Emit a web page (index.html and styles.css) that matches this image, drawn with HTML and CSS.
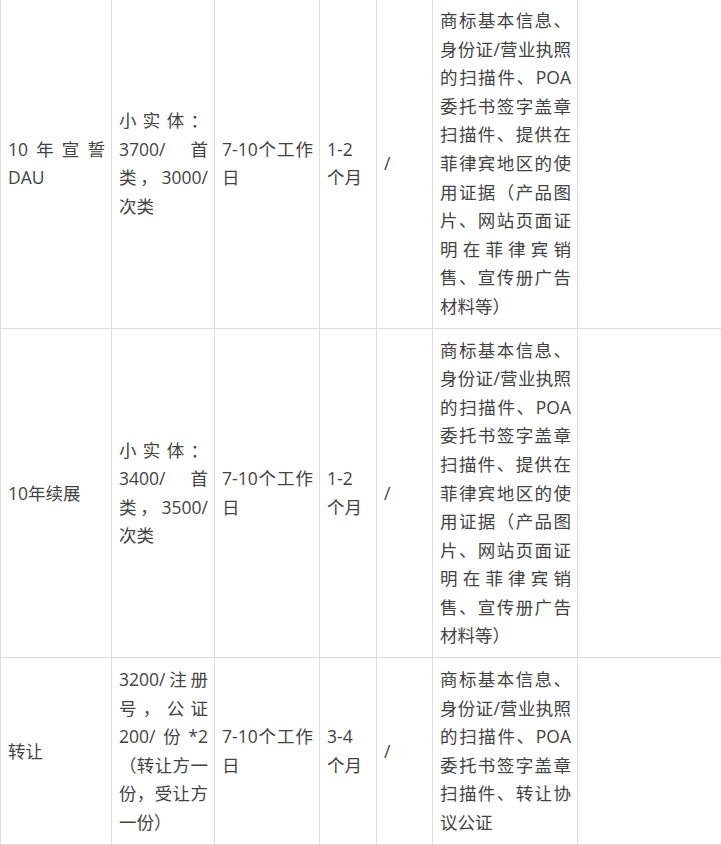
FILE: index.html
```html
<!DOCTYPE html>
<html lang="zh-CN">
<head>
<meta charset="utf-8">
<title>菲律宾商标费用</title>
<link rel="stylesheet" href="styles.css">
</head>
<body>
<table class="fees">
  <colgroup>
    <col class="c1"><col class="c2"><col class="c3"><col class="c4"><col class="c5"><col class="c6"><col class="c7">
  </colgroup>
  <tbody>
    <tr>
      <td>10年宣誓DAU</td>
      <td>小实体：3700/首类，3000/次类</td>
      <td>7-10个工作日</td>
      <td class="period">1-2个月</td>
      <td>/</td>
      <td>商标基本信息、身份证/营业执照的扫描件、POA委托书签字盖章扫描件、提供在菲律宾地区的使用证据（产品图片、网站页面证明在菲律宾销售、宣传册广告材料等）</td>
      <td></td>
    </tr>
    <tr>
      <td>10年续展</td>
      <td>小实体：3400/首类，3500/次类</td>
      <td>7-10个工作日</td>
      <td class="period">1-2个月</td>
      <td>/</td>
      <td>商标基本信息、身份证/营业执照的扫描件、POA委托书签字盖章扫描件、提供在菲律宾地区的使用证据（产品图片、网站页面证明在菲律宾销售、宣传册广告材料等）</td>
      <td></td>
    </tr>
    <tr>
      <td>转让</td>
      <td>3200/注册号，公证200/份*2（转让方一份，受让方一份）</td>
      <td>7-10个工作日</td>
      <td class="period">3-4个月</td>
      <td>/</td>
      <td>商标基本信息、身份证/营业执照的扫描件、POA委托书签字盖章扫描件、转让协议公证</td>
      <td></td>
    </tr>
  </tbody>
</table>
</body>
</html>
```

FILE: styles.css
```css
html, body {
  margin: 0;
  padding: 0;
  background: #ffffff;
}

.fees {
  margin-top: -2px;
  width: 721px;
  table-layout: fixed;
  border-collapse: collapse;
  font-family: "Open Sans", "Noto Sans CJK SC", sans-serif;
  font-size: 17.5px;
  line-height: 28.6px;
  color: #434343;
}

.c1 { width: 111px; }
.c2 { width: 103px; }
.c3 { width: 105px; }
.c4 { width: 57px; }
.c5 { width: 56px; }
.c6 { width: 145px; }
.c7 { width: 144px; }

.fees td {
  border: 1px solid #dddddd;
  padding: 7px 6px 7px 7px;
  vertical-align: middle;
  text-align: justify;
  word-break: normal;
}

.fees td.period {
  padding-right: 9px;
}
```
